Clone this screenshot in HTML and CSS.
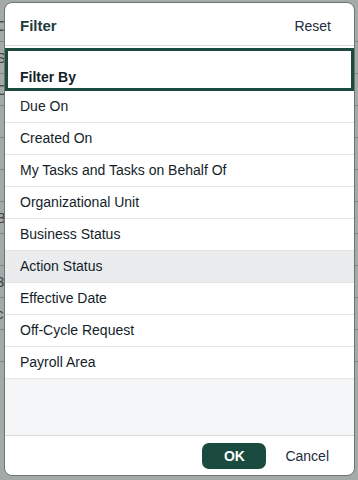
FILE: index.html
```html
<!DOCTYPE html>
<html lang="en">
<head>
    <meta charset="UTF-8">
    <meta name="viewport" content="width=device-width, initial-scale=1.0">
    <title>Filter</title>
    <link rel="stylesheet" href="styles.css">
</head>
<body>

    <!-- page behind the dialog, dimmed -->
    <div class="backdrop">
        <div class="bg-row">C</div>
        <div class="bg-row">S</div>
        <div class="bg-row">O</div>
        <div class="bg-row"></div>
        <div class="bg-row"></div>
        <div class="bg-row"></div>
        <div class="bg-row">B</div>
        <div class="bg-row"></div>
        <div class="bg-row">3</div>
        <div class="bg-row">c</div>
        <div class="bg-row"></div>
    </div>

    <div class="dialog">
        <div class="dialog-header">
            <h2>Filter</h2>
            <button class="link-btn">Reset</button>
        </div>

        <div class="dialog-content">
            <div class="list-header">Filter By</div>
            <ul class="filter-list">
                <li>Due On</li>
                <li>Created On</li>
                <li>My Tasks and Tasks on Behalf Of</li>
                <li>Organizational Unit</li>
                <li>Business Status</li>
                <li class="hover">Action Status</li>
                <li>Effective Date</li>
                <li>Off-Cycle Request</li>
                <li>Payroll Area</li>
            </ul>
        </div>

        <div class="dialog-footer">
            <button class="ok-btn">OK</button>
            <button class="link-btn">Cancel</button>
        </div>
    </div>

</body>
</html>
```

FILE: styles.css
```css
body {
    margin: 0;
    padding: 0;
    font-family: "Liberation Sans", Arial, sans-serif;
    color: #1d2d3e;
    background: #a3aaa7;
    width: 358px;
    height: 480px;
    overflow: hidden;
    position: relative;
}

.backdrop {
    padding-top: 10px;
}

.bg-row {
    height: 31px;
    border-bottom: 1px solid #7e8784;
    color: #3d4643;
    font-size: 15px;
    line-height: 31px;
    padding-left: 0;
    text-indent: -4px;
}

.dialog {
    position: absolute;
    top: 2px;
    left: 4px;
    width: 349px;
    height: 472px;
    background: #ffffff;
    border: 1px solid #6c7572;
    border-radius: 8px;
    display: flex;
    flex-direction: column;
    overflow: hidden;
}

.dialog-header {
    height: 42px;
    display: flex;
    align-items: center;
    justify-content: space-between;
    padding: 0 23px 0 15px;
    border-bottom: 1px solid #d9d9d9;
    flex-shrink: 0;
}

.dialog-header h2 {
    margin: 0;
    font-size: 15px;
    font-weight: bold;
    color: #1f3b3c;
    padding-top: 3px;
}

.dialog-header .link-btn {
    padding-top: 4px;
}

.link-btn {
    background: none;
    border: none;
    padding: 0;
    font-family: inherit;
    font-size: 14px;
    color: #1d2d3e;
    cursor: pointer;
}

.dialog-content {
    flex: 1;
    background: #f5f6f7;
    margin-top: 2px;
}

.list-header {
    height: 34px;
    border: 3px solid #1c4a3e;
    background: #ffffff;
    font-size: 14px;
    font-weight: bold;
    color: #131e29;
    display: flex;
    align-items: flex-end;
    padding: 0 12px 3px;
}

.filter-list {
    list-style: none;
    margin: 0;
    padding: 0;
    background: #ffffff;
}

.filter-list li {
    height: 31px;
    line-height: 31px;
    padding-left: 15px;
    font-size: 14px;
    color: #131e29;
    border-bottom: 1px solid #e5e5e5;
}

.filter-list li.hover {
    background: #eaecee;
}

.dialog-footer {
    height: 39px;
    border-top: 1px solid #d9d9d9;
    display: flex;
    align-items: center;
    justify-content: flex-end;
    gap: 19px;
    padding-right: 25px;
    flex-shrink: 0;
}

.ok-btn {
    width: 64px;
    height: 26px;
    background: #1b4b3f;
    color: #ffffff;
    border: none;
    border-radius: 7px;
    font-family: inherit;
    font-size: 14px;
    font-weight: bold;
    cursor: pointer;
}
```
